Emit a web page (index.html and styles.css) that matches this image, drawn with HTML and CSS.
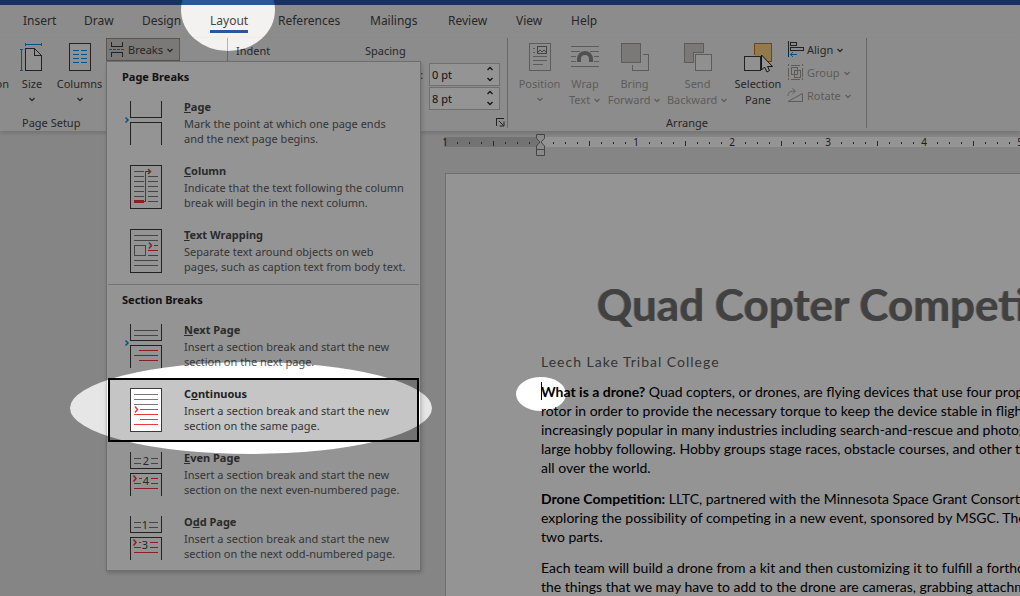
FILE: index.html
```
<!DOCTYPE html>
<html lang="en">
<head>
<meta charset="utf-8">
<title>Quad Copter Competition</title>
<link rel="stylesheet" href="styles.css">
</head>
<body>
<svg width="0" height="0" class="defs" aria-hidden="true">
  <symbol id="caret" viewBox="0 0 8 8"><path d="M1.5 3 L4 5.500 L6.500 3" fill="none" stroke="currentColor" stroke-width="1.250"/></symbol>
  <symbol id="up" viewBox="0 0 8 8"><path d="M1.500 5 L4 2.500 L6.500 5" fill="none" stroke="currentColor" stroke-width="1.250"/></symbol>
</svg>
<div class="app">
  <header class="titlebar"></header>
  <nav class="tabs">
    <a href="#insert">Insert</a>
    <a href="#draw">Draw</a>
    <a href="#design">Design</a>
    <a href="#layout" class="active">Layout</a>
    <a href="#references">References</a>
    <a href="#mailings">Mailings</a>
    <a href="#review">Review</a>
    <a href="#view">View</a>
    <a href="#help">Help</a>
  </nav>

  <section class="ribbon">
    <div class="group setup">
      <div class="tools">
        <button class="tool cut"><span class="glyph"></span>on</button>
        <button class="tool size">
          <svg class="glyph" width="28" height="30" viewBox="0 0 28 30" fill="none" shape-rendering="crispEdges">
            <path d="M7.500 7.500 H16.500 L23.500 14.500 V29.500 H7.500 Z" stroke="#3b3b3b" fill="#fafafa"/>
            <path d="M16.500 7.500 V14.500 H23.500" stroke="#3b3b3b"/>
            <path d="M7.500 2 V5 M23.500 2 V5 M7.500 3.500 H23.500 M2 8.500 H5 M2 29.500 H5 M3.500 8.500 V29.500" stroke="#1e8bcd"/>
          </svg>
          Size<svg class="caret"><use href="#caret"/></svg>
        </button>
        <button class="tool columns">
          <svg class="glyph" width="28" height="30" viewBox="0 0 28 30" fill="none" shape-rendering="crispEdges">
            <rect x="3.500" y="2.500" width="21" height="27" stroke="#3b3b3b" fill="#fafafa"/>
            <path d="M7 9.500 H13 M15 9.500 H21 M7 13.500 H13 M15 13.500 H21 M7 17.500 H13 M15 17.500 H21 M7 21.500 H13 M15 21.500 H21" stroke="#1e8bcd"/>
          </svg>
          Columns<svg class="caret"><use href="#caret"/></svg>
        </button>
        <div class="breaks">
          <button class="breaks-button" aria-expanded="true">
            <svg width="17" height="17" viewBox="0 0 17 17" fill="none" shape-rendering="crispEdges">
              <path d="M3.500 1 V5.500 H14.500 V1 M3.500 16 V11.500 H14.500 V16" stroke="#3b3b3b"/>
              <path d="M1 8.500 H4 M5 8.500 H8 M9 8.500 H12 M13 8.500 H16" stroke="#1e8bcd"/>
            </svg>
            Breaks<svg class="caret"><use href="#caret"/></svg>
          </button>

          <div class="menu">
            <h2>Page Breaks</h2>
            <button class="item">
              <svg width="38" height="44" viewBox="0 0 38 44" fill="none" shape-rendering="crispEdges">
                <path d="M6.500 0 V16.500 H37.500 V0 M6.500 44 V21.500 H37.500 V44" stroke="#3b3b3b"/>
                <path d="M1.500 16.500 L4 19 L1.500 21.500" stroke="#1e8bcd" stroke-width="1.500" shape-rendering="auto"/>
              </svg>
              <span><b><u>P</u>age</b>Mark the point at which one page ends<br>and the next page begins.</span>
            </button>
            <button class="item">
              <svg width="38" height="44" viewBox="0 0 38 44" fill="none" shape-rendering="crispEdges">
                <rect x="6.500" y=".5" width="31" height="43" stroke="#3b3b3b"/>
                <path d="M10 6.500 H20 M10 11.500 H20 M10 16.500 H20 M10 21.500 H20 M10 26.500 H20 M10 31.500 H20 M24 11.500 H34 M24 16.500 H34 M24 21.500 H34 M24 26.500 H34 M24 31.500 H34 M24 36.500 H34" stroke="#777"/>
                <path d="M10 35 H20 V38 H10 Z" fill="#e83a3a"/>
                <path d="M20 36.500 H21.500 V6.500 H26" stroke="#e83a3a"/>
                <path d="M24 4 L26.500 6.500 L24 9" stroke="#e83a3a" stroke-width="1.500" shape-rendering="auto"/>
              </svg>
              <span><b><u>C</u>olumn</b>Indicate that the text following the column<br>break will begin in the next column.</span>
            </button>
            <button class="item">
              <svg width="38" height="44" viewBox="0 0 38 44" fill="none" shape-rendering="crispEdges">
                <rect x="6.500" y=".5" width="31" height="43" stroke="#3b3b3b"/>
                <path d="M10 6.500 H34 M10 11.500 H34 M10 31.500 H34 M10 36.500 H34 M10.500 16.500 H21.500 V26.500 H10.500 Z" stroke="#777"/>
                <path d="M30 16.500 H34 M24 21.500 H34 M24 26.500 H34" stroke="#e83a3a"/>
                <path d="M25 13.500 L27.500 16.500 L25 19.500" stroke="#e83a3a" stroke-width="1.500" shape-rendering="auto"/>
              </svg>
              <span><b><u>T</u>ext Wrapping</b>Separate text around objects on web<br>pages, such as caption text from body text.</span>
            </button>
            <hr>
            <h2>Section Breaks</h2>
            <button class="item">
              <svg width="38" height="44" viewBox="0 0 38 44" fill="none" shape-rendering="crispEdges">
                <path d="M6.500 0 V16.500 H37.500 V0 M6.500 44 V21.500 H37.500 V44" stroke="#3b3b3b"/>
                <path d="M10 6.500 H34 M10 11.500 H34" stroke="#777"/>
                <path d="M15 26.500 H34 M10 31.500 H34 M15 36.500 H34" stroke="#e83a3a"/>
                <path d="M1.500 16.500 L4 19 L1.500 21.500" stroke="#1e8bcd" stroke-width="1.500" shape-rendering="auto"/>
              </svg>
              <span><b><u>N</u>ext Page</b>Insert a section break and start the new<br>section on the next page.</span>
            </button>
            <button class="item selected">
              <svg width="38" height="44" viewBox="0 0 38 44" fill="none" shape-rendering="crispEdges">
                <rect x="6.500" y=".5" width="31" height="43" stroke="#3b3b3b" fill="#fff"/>
                <path d="M10 6.500 H34 M10 11.500 H34 M10 16.500 H34" stroke="#777"/>
                <path d="M16 21.500 H34 M10 26.500 H34 M16 31.500 H34 M10 36.500 H34" stroke="#e83a3a"/>
                <path d="M11 18.500 L13.500 21.500 L11 24.500" stroke="#e83a3a" stroke-width="1.500" shape-rendering="auto"/>
              </svg>
              <span><b>C<u>o</u>ntinuous</b>Insert a section break and start the new<br>section on the same page.</span>
            </button>
            <button class="item">
              <svg width="38" height="44" viewBox="0 0 38 44" fill="none" shape-rendering="crispEdges">
                <path d="M6.500 0 V16.500 H37.500 V0 M6.500 44 V21.500 H37.500 V44" stroke="#3b3b3b"/>
                <path d="M10 6.500 H17 M10 11.500 H17 M27 6.500 H34 M27 11.500 H34" stroke="#777"/>
                <path d="M15 26.500 H18 M10 31.500 H17 M27 26.500 H34 M27 31.500 H34 M10 36.500 H34" stroke="#e83a3a"/>
                <path d="M9.500 23.500 L12 26.500 L9.500 29.500" stroke="#e83a3a" stroke-width="1.500" shape-rendering="auto"/>
                <text x="22" y="13">2</text><text x="22" y="33">4</text>
              </svg>
              <span><b><u>E</u>ven Page</b>Insert a section break and start the new<br>section on the next even-numbered page.</span>
            </button>
            <button class="item">
              <svg width="38" height="44" viewBox="0 0 38 44" fill="none" shape-rendering="crispEdges">
                <path d="M6.500 0 V16.500 H37.500 V0 M6.500 44 V21.500 H37.500 V44" stroke="#3b3b3b"/>
                <path d="M10 6.500 H17 M10 11.500 H17 M25 6.500 H34 M25 11.500 H34" stroke="#777"/>
                <path d="M15 26.500 H17 M10 31.500 H17 M26 26.500 H34 M26 31.500 H34 M10 36.500 H34" stroke="#e83a3a"/>
                <path d="M9.500 23.500 L12 26.500 L9.500 29.500" stroke="#e83a3a" stroke-width="1.500" shape-rendering="auto"/>
                <text x="21" y="13">1</text><text x="21" y="33">3</text>
              </svg>
              <span><b>O<u>d</u>d Page</b>Insert a section break and start the new<br>section on the next odd-numbered page.</span>
            </button>
          </div>
        </div>
      </div>
      <div class="caption">Page Setup</div>
    </div>

    <div class="group paragraph">
      <div class="tools">
        <div class="indent">Indent</div>
        <div class="spacing">
          <div>Spacing</div>
          <div class="field">
            <label for="before">Before:</label>
            <span class="spin"><input id="before" type="text" value="0 pt">
              <span class="steps"><button aria-label="Increase before"><svg class="caret"><use href="#up"/></svg></button><button aria-label="Decrease before"><svg class="caret"><use href="#caret"/></svg></button></span></span>
          </div>
          <div class="field">
            <label for="after">After:</label>
            <span class="spin"><input id="after" type="text" value="8 pt">
              <span class="steps"><button aria-label="Increase after"><svg class="caret"><use href="#up"/></svg></button><button aria-label="Decrease after"><svg class="caret"><use href="#caret"/></svg></button></span></span>
          </div>
        </div>
      </div>
      <div class="caption">
        <button class="launcher" aria-label="Paragraph settings">
          <svg width="9" height="9" viewBox="0 0 9 9" fill="none" stroke="#3b3b3b"><path d="M.5 8 V.5 H8" shape-rendering="crispEdges"/><path d="M3 3 L7.500 7.500 M8 3.500 V8 H3.500"/></svg>
        </button>
      </div>
    </div>

    <div class="group arrange">
      <div class="tools">
        <button class="tool position" disabled>
          <svg class="glyph" width="28" height="30" viewBox="0 0 28 30" fill="none" shape-rendering="crispEdges" stroke="#a19f9d">
            <rect x="3.500" y="2.500" width="21" height="27"/>
            <path d="M7 7.500 H9 M7 11.500 H9 M7 15.500 H21 M7 19.500 H21 M7 23.500 H17"/>
            <path d="M11.500 5.500 H20.500 V12.500 H11.500 Z M12 11 L14 9 L16 11 L18 9 L20 11" stroke="#777"/>
          </svg>
          Position<svg class="caret"><use href="#caret"/></svg>
        </button>
        <button class="tool wrap" disabled>
          <svg class="glyph" width="28" height="30" viewBox="0 0 28 30" fill="none">
            <path d="M0 5.500 H28 M0 10.500 H9 M19 10.500 H28 M0 15.500 H5 M23 15.500 H28 M0 20.500 H5 M23 20.500 H28 M0 25.500 H28" stroke="#a19f9d" shape-rendering="crispEdges"/>
            <path d="M8 21 V18 A6 6 0 0 1 20 18 V21" stroke="#8a8a8a" stroke-width="4"/>
          </svg>
          Wrap<span>Text <svg class="caret"><use href="#caret"/></svg></span>
        </button>
        <button class="tool bring" disabled>
          <svg class="glyph" width="28" height="30" viewBox="0 0 28 30" fill="none" shape-rendering="crispEdges" stroke="#a19f9d">
            <path d="M22 13.500 H27.500 V29.500 H11.500 V24"/><rect x=".5" y="2.500" width="19" height="19" fill="#d2d0ce"/>
          </svg>
          Bring<span>Forward <svg class="caret"><use href="#caret"/></svg></span>
        </button>
        <button class="tool send" disabled>
          <svg class="glyph" width="28" height="30" viewBox="0 0 28 30" fill="none" shape-rendering="crispEdges" stroke="#a19f9d">
            <path d="M9 21.500 H.5 V2.500 H19.500 V11 H9 Z" fill="#d2d0ce"/><rect x="11.500" y="13.500" width="16" height="16" fill="#f8f8f8"/>
          </svg>
          Send<span>Backward <svg class="caret"><use href="#caret"/></svg></span>
        </button>
        <button class="tool selection">
          <svg class="glyph" width="30" height="32" viewBox="0 0 30 32" fill="none">
            <path d="M11.500 14 V2.500 H28.500 V20.500 H17" fill="#fbd384" stroke="#d8740c" shape-rendering="crispEdges"/>
            <path d="M1.500 15.500 H17.500 V29.500 H1.500 Z" fill="#fafafa" stroke="#3b3b3b" shape-rendering="crispEdges"/>
            <path d="M18.500 14 V29 L21.500 26 L24 31 L26.500 29.500 L24.500 25.500 H29.500 Z" fill="#fff" stroke="#222"/>
          </svg>
          Selection<span>Pane</span>
        </button>
        <div class="stack">
          <button class="row">
            <svg width="17" height="17" viewBox="0 0 17 17" fill="none" shape-rendering="crispEdges"><path d="M1.500 0 V16 M3.500 1.500 H9.500 V4.500 H3.500 Z M3.500 6.500 H16.500 V9.500 H3.500 Z" stroke="#3b3b3b"/><path d="M3.500 13.500 H10 M6 11 L3.500 13.500 L6 16" stroke="#1e8bcd" shape-rendering="auto"/></svg>
            Align <svg class="caret"><use href="#caret"/></svg>
          </button>
          <button class="row" disabled>
            <svg width="17" height="17" viewBox="0 0 17 17" fill="none" shape-rendering="crispEdges" stroke="#a19f9d"><path d="M4.500 3.500 H10.500 V10.500 H4.500 Z M7.500 6.500 H13.500 V13.500 H7.500 Z M4 1.500 H13 M4 15.500 H13 M1.500 4 V13 M15.500 4 V13" /><path d="M1 1 H2 M15 1 H16 M1 15 H2 M15 15 H16" stroke-width="2"/></svg>
            Group <svg class="caret"><use href="#caret"/></svg>
          </button>
          <button class="row" disabled>
            <svg width="17" height="17" viewBox="0 0 17 17" fill="none" stroke="#a19f9d"><path d="M1 14.500 H15.500 V6.500 Z"/><path d="M1 9 C1 5 4 4 8 4 M5.500 1.500 L8.500 4 L5.500 7"/></svg>
            Rotate <svg class="caret"><use href="#caret"/></svg>
          </button>
        </div>
      </div>
      <div class="caption">Arrange</div>
    </div>
  </section>

  <main class="workspace">
    <svg class="ruler" width="100%" height="24">
      <defs>
        <pattern id="inch" x="97" width="96" height="24" patternUnits="userSpaceOnUse">
          <path d="M12.500 11 v2 M24.500 11 v2 M36.500 11 v2 M48.500 10 v5 M60.500 11 v2 M72.500 11 v2 M84.500 11 v2" stroke="#444" shape-rendering="crispEdges"/>
        </pattern>
      </defs>
      <rect y="6" width="97" height="10" fill="#c6c6c6"/>
      <rect x="97" y="6" width="100%" height="10" fill="#fff"/>
      <rect width="100%" height="24" fill="url(#inch)"/>
      <text x="1" y="15">1</text><text x="192" y="15">1</text><text x="288" y="15">2</text><text x="384" y="15">3</text><text x="480" y="15">4</text><text x="576" y="15">5</text>
      <path d="M92.500 3.500 H100.500 V7.500 L97 11 L100.500 15 V24.500 H92.500 V15 L96 11 L92.500 7.500 Z M92.500 18.500 H100.500" fill="#eee" stroke="#777"/>
    </svg>
    <article class="page">
      <h1>Quad Copter Competition</h1>
      <p class="subtitle">Leech Lake Tribal College</p>
      <p><i class="cursor"></i><strong>What is a drone?</strong> Quad copters, or drones, are flying devices that use four propellers<br>rotor in order to provide the necessary torque to keep the device stable in flight.<br>increasingly popular in many industries including search-and-rescue and photography<br>large hobby following. Hobby groups stage races, obstacle courses, and other tasks<br>all over the world.</p>
      <p><strong>Drone Competition:</strong> LLTC, partnered with the Minnesota Space Grant Consortium<br>exploring the possibility of competing in a new event, sponsored by MSGC. The competition<br>two parts.</p>
      <p>Each team will build a drone from a kit and then customizing it to fulfill a forthcoming<br>the things that we may have to add to the drone are cameras, grabbing attachments</p>
    </article>
  </main>
</div>
<svg class="dim" aria-hidden="true">
  <mask id="spots">
    <rect width="100%" height="100%" fill="#fff"/>
    <ellipse cx="228" cy="10" rx="47" ry="41"/>
    <ellipse cx="251" cy="408" rx="181" ry="46"/>
    <ellipse cx="541" cy="394" rx="25" ry="17"/>
  </mask>
  <rect width="100%" height="100%" fill-opacity=".42" mask="url(#spots)"/>
</svg>
</body>
</html>
```
FILE: styles.css
```
* { box-sizing: border-box; }

body {
  margin: 0;
  font: 11px/16px "Noto Sans", "Open Sans", sans-serif;
  color: #444;
}

button, input {
  margin: 0;
  padding: 0;
  border: 0;
  background: none;
  font: inherit;
  color: inherit;
}

button:disabled { color: #a19f9d; }

.defs { position: absolute; }

.app {
  display: flex;
  flex-direction: column;
  height: 100vh;
  overflow: hidden;
  background: #e6e6e6;
}

.titlebar {
  flex: none;
  height: 5px;
  background: #2b579a;
}

.tabs {
  flex: none;
  display: grid;
  grid-template-columns: 61px 58px 68px 68px 92px 78px 68px 55px 1fr;
  justify-items: start;
  height: 33px;
  padding: 5px 0 0 23px;
  background: #f3f2f1;
  font-size: 12px;
  line-height: 22px;
}

.tabs a {
  height: 23px;
  color: inherit;
  text-decoration: none;
}

.tabs .active { border-bottom: 3px solid #2b579a; }

.ribbon {
  flex: none;
  position: relative;
  z-index: 1;
  display: flex;
  height: 93px;
  background: #f3f2f1;
  box-shadow: 0 2px 4px rgba(0, 0, 0, .15);
}

.group {
  display: flex;
  flex-direction: column;
  justify-content: space-between;
  border-right: 1px solid transparent;
  border-image: linear-gradient(transparent 1px, #b5b3b1 1px, #b5b3b1 89px, transparent 89px) 1;
}

.tools { display: flex; }

.setup { width: 228px; }
.paragraph { width: 280px; }
.arrange { width: 359px; }

.caption {
  height: 16px;
  text-align: center;
}

.setup .caption {
  padding-left: 22px;
  text-align: left;
}

.paragraph .caption {
  display: flex;
  justify-content: flex-end;
  padding-right: 2px;
}

.launcher {
  width: 9px;
  height: 14px;
}

.caret {
  width: 8px;
  height: 8px;
}

.tool {
  display: flex;
  flex-direction: column;
  align-items: center;
  padding-top: 3px;
  white-space: nowrap;
}

.tool .glyph {
  flex: none;
  height: 32px;
  padding-bottom: 2px;
  margin-bottom: 3px;
}

.selection .glyph { padding: 0; }

.tool > .caret { margin-top: 3px; }

.cut { width: 9px; align-items: flex-end; }
.size { width: 46px; }
.columns { width: 49px; }
.position { width: 45px; }
.wrap { width: 46px; }
.bring { width: 53px; }
.send { width: 73px; }
.selection { width: 48px; }

.breaks {
  position: relative;
  align-self: flex-start;
  margin-left: 2px;
}

.breaks-button {
  display: flex;
  align-items: center;
  gap: 3px;
  width: 74px;
  height: 23px;
  padding-left: 1px;
  border: 1px solid #979593;
  background: #d2d0ce;
}

.menu {
  position: absolute;
  top: 100%;
  left: 0;
  width: 315px;
  padding: 0 1px;
  border: 1px solid #c0c0c0;
  background: #fff;
  box-shadow: 1px 2px 4px rgba(0, 0, 0, .2);
}

.menu h2 {
  margin: 0;
  padding: 0 14px;
  font-size: 11px;
  line-height: 29px;
  color: #222;
}

.menu hr {
  margin: 1px 0 0;
  border: 0;
  border-top: 1px solid #c6c6c6;
}

.item {
  display: flex;
  align-items: flex-start;
  gap: 22px;
  width: 100%;
  height: 64px;
  padding: 7px 0 0 16px;
  text-align: left;
  line-height: 15px;
  white-space: nowrap;
  color: #5c5c5c;
}

.item svg {
  flex: none;
  margin-top: 3px;
}

.item text {
  font-size: 11px;
  text-anchor: middle;
  fill: #444;
}

.item b {
  display: block;
  line-height: 18px;
  color: #4a4a4a;
}

.item.selected {
  padding: 5px 0 0 14px;
  border: 2px solid #000;
  background: #c5c5c5;
  color: #333;
}

.item.selected b { color: #222; }

.indent {
  width: 137px;
  padding: 5px 8px;
}

.spacing {
  display: flex;
  flex-direction: column;
  gap: 1px;
  padding-top: 5px;
}

.field {
  display: flex;
  justify-content: flex-end;
  align-items: center;
  gap: 5px;
  width: 135px;
}

.field label { width: 38px; }

.field:nth-child(2) { margin-top: 3px; }

.spin {
  display: flex;
  width: 71px;
  height: 23px;
  border: 1px solid #c0c0c0;
  background: #fff;
  color: #222;
}

.spin input {
  flex: 1;
  width: 0;
  padding-left: 2px;
}

.steps {
  display: flex;
  flex-direction: column;
  justify-content: space-around;
  width: 13px;
}

.steps button {
  display: flex;
  height: 9px;
}

.arrange .tools { padding-left: 9px; }

.stack {
  display: flex;
  flex-direction: column;
  padding-left: 5px;
}

.row {
  display: flex;
  align-items: center;
  gap: 3px;
  height: 23px;
}

.workspace {
  flex: 1;
  overflow: hidden;
  padding: 0 0 0 445px;
  background: #e6e6e6;
}

.ruler {
  display: block;
  margin-left: -1px;
  overflow: visible;
}

.ruler text {
  font-size: 10px;
  text-anchor: middle;
  fill: #333;
}

.page {
  margin-top: 18px;
  padding: 105px 0 0 95px;
  border: 1px solid #c0c0c0;
  border-right: 0;
  background: #fff;
  font: 14px/19px Lato, "Open Sans", sans-serif;
  color: #000;
  white-space: nowrap;
}

.page h1 {
  margin: 0;
  padding-left: 56px;
  font-size: 44px;
  line-height: 50px;
  color: #707070;
  text-shadow: -1px 0 0 #a8a8a8;
}

.page p { margin: 0 0 12px; }

.page .subtitle {
  margin: 23px 0 11px;
  letter-spacing: 1px;
  color: #5a5a5a;
}

.cursor {
  position: absolute;
  width: 1px;
  height: 18px;
  background: #000;
}

.dim {
  position: fixed;
  inset: 0;
  width: 100%;
  height: 100%;
  z-index: 2;
  pointer-events: none;
}
```
